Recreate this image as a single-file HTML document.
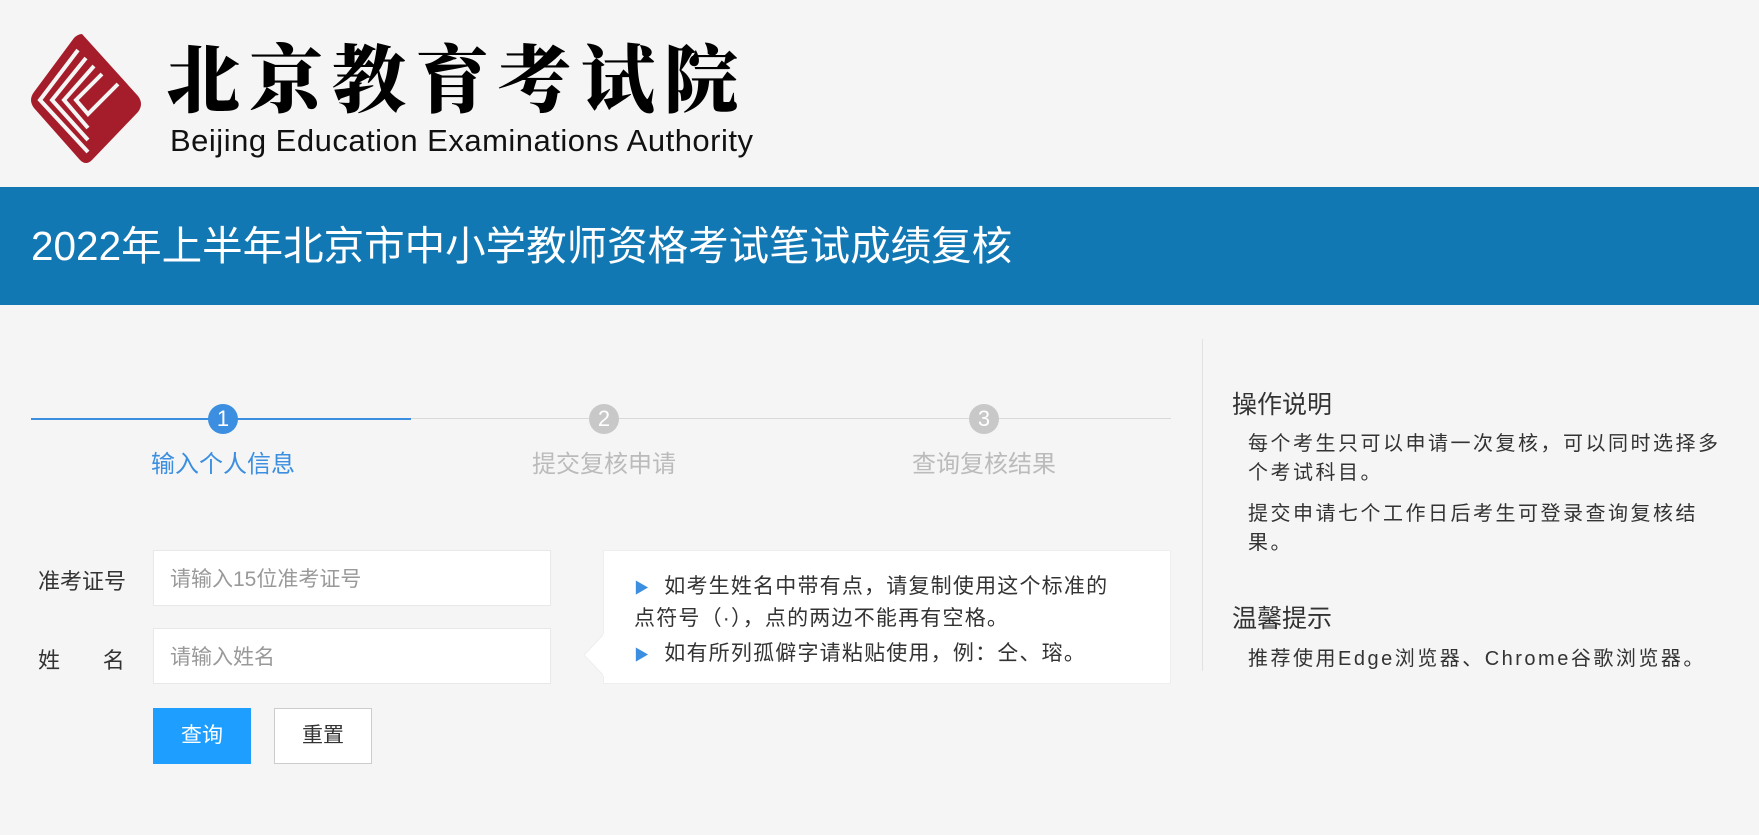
<!DOCTYPE html>
<html><head><meta charset="utf-8"><style>
*{margin:0;padding:0;box-sizing:border-box}
body{width:1759px;height:835px;background:#f5f5f5;font-family:"Liberation Sans","Noto Sans CJK SC",sans-serif;position:relative;overflow:hidden}
.a{position:absolute;white-space:nowrap}
.band{position:absolute;left:0;top:187px;width:1759px;height:118px;background:#1278b4}
.inp{position:absolute;background:#fff;border:1px solid #e8e8e8;color:#999;font-size:21px;padding-left:16px;display:flex;align-items:center}
.circ{position:absolute;width:30px;height:30px;border-radius:50%;color:#fff;font-size:22px;text-align:center;line-height:30px;top:404px}
.step{position:absolute;top:444px;font-size:24px;width:240px;text-align:center}
.r{position:absolute;font-size:20px;color:#333;left:1248px;line-height:29px;letter-spacing:2.5px}
.h{position:absolute;font-size:25px;color:#333;left:1232px}
</style></head><body>
<svg class="a" style="left:30px;top:34px" width="118" height="130" viewBox="0 0 118 130">
<path d="M52 0 L108 62 Q114 70 108 78 L62 126 Q56 132 50 126 L4 74 Q-2 66 4 58 L44 4 Q48 0 52 0Z" fill="#a51c2a"/>
<path d="M48 16 L10 66 L58 118 M56 24 L22 66 L58 106 M64 32 L34 66 L58 94 M72 40 L46 66 L58 80 L88 50" fill="none" stroke="#f5f5f5" stroke-width="4"/>
</svg>
<div class="a" style="left:166px;top:30px;font-family:'Noto Serif CJK SC',serif;font-size:74px;font-weight:900;letter-spacing:9px;color:#000;line-height:90px">北京教育考试院</div>
<div class="a" style="left:170px;top:122px;font-size:31px;color:#111;line-height:38px;letter-spacing:0.5px">Beijing Education Examinations Authority</div>
<div class="band"></div>
<div class="a" style="left:31px;top:222px;font-size:40.5px;color:#fff;line-height:48px">2022年上半年北京市中小学教师资格考试笔试成绩复核</div>
<div class="a" style="left:1202px;top:339px;width:1px;height:332px;background:#e2e2e2"></div>
<div class="a" style="left:31px;top:418px;width:1140px;height:1px;background:#d9d9d9"></div>
<div class="a" style="left:31px;top:418px;width:380px;height:2px;background:#3b8ee0"></div>
<div class="circ" style="left:208px;background:#3b8ee0">1</div>
<div class="circ" style="left:589px;background:#c8c8c8">2</div>
<div class="circ" style="left:969px;background:#c8c8c8">3</div>
<div class="step" style="left:103px;color:#3b8ee0">输入个人信息</div>
<div class="step" style="left:484px;color:#bbb">提交复核申请</div>
<div class="step" style="left:864px;color:#bbb">查询复核结果</div>
<div class="a" style="left:38px;top:564px;font-size:22px;color:#333">准考证号</div>
<div class="a" style="left:38px;top:643px;font-size:22px;color:#333">姓&nbsp;&nbsp;&nbsp;&nbsp;&nbsp;&nbsp;&nbsp;名</div>
<div class="inp" style="left:153px;top:550px;width:398px;height:56px">请输入15位准考证号</div>
<div class="inp" style="left:153px;top:628px;width:398px;height:56px">请输入姓名</div>
<div class="a" style="left:153px;top:708px;width:98px;height:56px;background:#1e9fff;color:#fff;font-size:21px;text-align:center;line-height:56px">查询</div>
<div class="a" style="left:274px;top:708px;width:98px;height:56px;background:#fff;border:1px solid #ccc;color:#333;font-size:21px;text-align:center;line-height:54px">重置</div>
<div class="a" style="left:603px;top:550px;width:568px;height:134px;background:#fff;border:1px solid #eee"></div>
<svg class="a" style="left:582px;top:634px" width="23" height="42"><path d="M22 0 L2 21 L22 42Z" fill="#fff" stroke="#eee"/><rect x="21" y="0" width="2" height="42" fill="#fff"/></svg>
<div class="a" style="left:634px;top:572px;font-size:21px;color:#333;line-height:30px;letter-spacing:1.2px">
<span style="color:#3b8ee0;font-size:15px">▶</span>&nbsp;&nbsp;如考生姓名中带有点，请复制使用这个标准的<br>点符号（·），点的两边不能再有空格。</div>
<div class="a" style="left:634px;top:639px;font-size:21px;color:#333;line-height:30px;letter-spacing:1.2px"><span style="color:#3b8ee0;font-size:15px">▶</span>&nbsp;&nbsp;如有所列孤僻字请粘贴使用，例：仝、瑢。</div>
<div class="h" style="top:385px">操作说明</div>
<div class="r" style="top:430px">每个考生只可以申请一次复核，可以同时选择多<br>个考试科目。</div>
<div class="r" style="top:500px">提交申请七个工作日后考生可登录查询复核结<br>果。</div>
<div class="h" style="top:599px">温馨提示</div>
<div class="r" style="top:645px">推荐使用Edge浏览器、Chrome谷歌浏览器。</div>
</body></html>
